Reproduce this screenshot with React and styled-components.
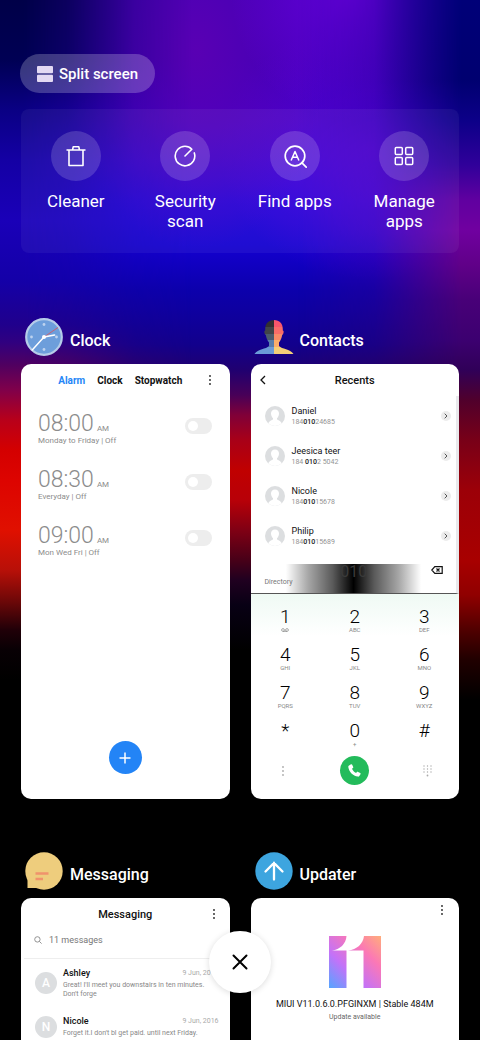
import { useState } from 'react';
import styled, { createGlobalStyle } from 'styled-components';

const GlobalStyle = createGlobalStyle`
    * {
        box-sizing:border-box;
    }
    body {
        margin:0;
        background-color:black;
        font-family:Roboto, "Noto Sans", sans-serif;
    }
    h2, h3, p, ul {
        margin:0;
        padding:0;
    }
    button, input {
        font-family:inherit;
        border:0;
        padding:0;
        background:none;
        color:inherit;
    }
    button {
        cursor:pointer;
    }
    svg {
        display:block;
        flex:none;
    }
`;

const Screen = styled.main`
    position:relative;
    height:100vh;
    overflow:hidden;
    padding:54px 21px 0;
    isolation:isolate;
`;

const Wallpaper = styled.div`
    position:absolute;
    inset:0;
    z-index:-1;
    background:
        radial-gradient(ellipse 120px 130px at 73% -10px, rgba(116,0,228,.8), transparent),
        radial-gradient(ellipse 130px 200px at 41% 50px, rgba(98,0,178,.75), transparent),
        radial-gradient(ellipse 150px 130px at 77% 150px, rgba(92,0,220,.7), transparent),
        linear-gradient(#3c00b8 0, #3c00b8 60px, #4000c4 120px, #3400d0 160px, #2200d8 200px, #1400d0 245px, #0c00ac 290px, #12008c 345px, #200070 370px, #480058 395px, #800038 415px, #a80018 440px, #c00000 470px, #b80008 500px, #800014 530px, #480018 560px, #200020 580px, #080014 605px, #000 650px);
    &::before, &::after {
        content:"";
        position:absolute;
        inset:0;
    }
    &::before {
        background:linear-gradient(#000048 0, #000054 60px, #0a0084 110px, #1400a4 160px, #1a00b8 220px, #1400a8 280px, #20008c 325px, #300080 342px, #500060 365px, #80004a 390px, #b8001a 420px, #d40000 450px, #dd0400 480px, #e01000 530px, #b81008 570px, #700808 600px, #200008 630px, #080004 650px, #000 680px);
        mask-image:linear-gradient(to right, black 5%, rgba(0,0,0,.8) 14%, rgba(0,0,0,.2) 28%, transparent 40%);
    }
    &::after {
        background:linear-gradient(#000078 0, #000070 80px, #0c0088 120px, #30009a 165px, #6000a0 200px, #7000a0 230px, #600088 265px, #480078 300px, #3c0070 340px, #300058 370px, #50002c 400px, #780018 440px, #9c0008 490px, #a80000 560px, #900000 595px, #500000 630px, #200000 660px, #000 700px);
        mask-image:linear-gradient(to left, black 4%, rgba(0,0,0,.7) 11%, rgba(0,0,0,.2) 22%, transparent 38%);
    }
`;

const SplitButton = styled.button`
    display:flex;
    align-items:center;
    gap:6px;
    height:39px;
    margin-left:-1px;
    padding:0 17px;
    border-radius:20px;
    background-color:rgba(255,255,255,.22);
    color:white;
    font-size:15px;
    font-weight:500;
`;

const Tools = styled.section`
    display:grid;
    grid-template-columns:repeat(4, 1fr);
    height:144px;
    margin-top:16px;
    padding-top:22px;
    border-radius:8px;
    background-color:rgba(255,255,255,.05);
`;

const Tool = styled.button`
    display:flex;
    flex-direction:column;
    align-items:center;
    gap:10px;
    color:white;
    font-size:17px;
    line-height:20px;
`;

const ToolIcon = styled.span`
    display:grid;
    place-items:center;
    width:50px;
    height:50px;
    border-radius:50%;
    background-color:rgba(255,255,255,.16);
`;

const ToolLabel = styled.span`
    max-width:80px;
`;

const Recents = styled.section`
    display:grid;
    grid-template-columns:1fr 1fr;
    gap:52px 21px;
    margin-top:64px;
`;

const AppTitle = styled.header`
    display:flex;
    align-items:center;
    gap:6px;
    height:40px;
    margin-bottom:7px;
    padding-left:3px;
    color:white;
    h2 {
        padding-top:7px;
        font-size:16px;
        font-weight:500;
        line-height:20px;
    }
`;

const Card = styled.div`
    display:flex;
    flex-direction:column;
    height:435px;
    overflow:hidden;
    border-radius:10px;
    background-color:white;
    color:#111;
`;

const CardBar = styled.div`
    display:grid;
    grid-template-columns:24px 1fr 24px;
    align-items:center;
    flex:none;
    height:${props => props.$height || 32}px;
    padding-right:${props => props.$end}px;
    text-align:center;
    h3 {
        grid-column:2;
        padding-left:${props => props.$end}px;
        font-size:11px;
        font-weight:500;
    }
`;

const IconButton = styled.button`
    display:grid;
    place-items:center;
    height:24px;
`;

const MoreButton = styled(IconButton)`
    grid-column:3;
`;

const Tabs = styled.div`
    grid-column:2;
    display:flex;
    justify-content:center;
    gap:12px;
    padding-right:2px;
`;

const Tab = styled.button`
    color:${props => props.$active ? '#2586f7' : '#111'};
    font-size:10px;
    font-weight:700;
`;

const AlarmList = styled.ul`
    flex:1;
    padding:17px 18px 0 17px;
    list-style:none;
`;

const AlarmRow = styled.li`
    display:flex;
    align-items:flex-start;
    justify-content:space-between;
    height:56px;
    color:#8c8c8c;
`;

const AlarmTime = styled.p`
    display:flex;
    align-items:baseline;
    gap:3px;
    height:22px;
    font-size:23px;
    font-weight:300;
    line-height:22px;
    span {
        font-size:8px;
        font-weight:400;
    }
`;

const AlarmDays = styled.p`
    font-size:8px;
    line-height:12px;
`;

const Switch = styled.input`
    appearance:none;
    width:27px;
    height:16px;
    margin:5px 0 0;
    padding:3px;
    border-radius:8px;
    background-color:#ededed;
    cursor:pointer;
    &::before {
        content:"";
        display:block;
        width:10px;
        height:10px;
        border-radius:50%;
        background-color:white;
    }
    &:checked {
        background-color:#2586f7;
    }
    &:checked::before {
        margin-left:11px;
    }
`;

const RoundButton = styled.button`
    display:grid;
    place-items:center;
    width:${props => props.$size}px;
    height:${props => props.$size}px;
    border-radius:50%;
    background-color:${props => props.$color};
`;

const AddRow = styled.div`
    display:flex;
    justify-content:center;
    padding-bottom:25px;
`;

const CallList = styled.ul`
    flex:none;
    height:168px;
    border-right:3px solid #e9e9ec;
    list-style:none;
`;

const CallRow = styled.li`
    display:flex;
    align-items:center;
    height:40px;
    padding:0 5px 0 14px;
    > div {
        flex:1;
        margin-left:7px;
    }
`;

const CallName = styled.p`
    font-size:9px;
    line-height:12px;
`;

const CallNumber = styled.p`
    color:#949494;
    font-size:7px;
    line-height:10px;
    b {
        color:#222;
        font-weight:500;
    }
`;

const Chevron = styled.button`
    display:grid;
    place-items:center;
    width:10px;
    height:10px;
    border-radius:50%;
    background-color:#ececec;
`;

const NumberField = styled.div`
    display:grid;
    grid-template-columns:1fr 1fr 1fr;
    flex:none;
    height:30px;
    padding:0 13px 0 14px;
    border-bottom:1px solid #555;
    border-right:3px solid #e9e9ec;
    background:linear-gradient(to right, transparent 17%, rgba(0,0,0,.35) 28%, rgba(0,0,0,.65) 40%, black 50%, rgba(0,0,0,.65) 60%, rgba(0,0,0,.35) 72%, transparent 83%);
    span {
        align-self:center;
        padding-top:6px;
        color:#777;
        font-size:7px;
    }
    input {
        width:100%;
        height:14px;
        color:#3a3a3a;
        font-size:16px;
        text-align:center;
    }
    button {
        justify-self:end;
        height:12px;
    }
`;

const Keypad = styled.div`
    display:grid;
    grid-template-columns:repeat(3, 1fr);
    grid-auto-rows:38px;
    flex:none;
    padding-top:7px;
    background:linear-gradient(#effaf4, white 42px);
`;

const Key = styled.button`
    display:flex;
    flex-direction:column;
    align-items:center;
    padding-top:6px;
    color:black;
    font-size:19px;
    font-weight:300;
    line-height:20px;
    small {
        display:grid;
        place-items:center;
        height:6px;
        color:#888;
        font-size:6px;
        font-weight:400;
        line-height:6px;
    }
`;

const DialBar = styled.div`
    display:grid;
    grid-template-columns:64px 1fr 64px;
    place-items:center;
    padding-top:3px;
`;

const SearchBox = styled.label`
    display:flex;
    align-items:center;
    gap:7px;
    flex:none;
    height:29px;
    margin:0 3px;
    padding:0 10px 8px;
    border-bottom:1px solid #eee;
    input {
        width:100%;
        font-size:9px;
    }
    input::placeholder {
        color:#777;
        opacity:1;
    }
`;

const MessageRow = styled.li`
    display:grid;
    grid-template-columns:22px 1fr;
    align-content:start;
    align-items:center;
    gap:6px;
    height:48px;
    padding:8px 11px 0 14px;
    list-style:none;
`;

const Initial = styled.span`
    display:grid;
    place-items:center;
    width:22px;
    height:22px;
    border-radius:50%;
    background-color:#dcdee0;
    color:white;
    font-size:12px;
    font-weight:500;
`;

const MessageHead = styled.div`
    display:flex;
    align-items:center;
    justify-content:space-between;
    height:12px;
    font-size:9px;
    font-weight:500;
    time {
        color:#aaa;
        font-size:7px;
        font-weight:400;
    }
`;

const MessageText = styled.p`
    margin-top:2px;
    color:#888;
    font-size:7px;
    line-height:9px;
`;

const UpdateInfo = styled.div`
    display:flex;
    flex-direction:column;
    align-items:center;
    padding-top:14px;
    h3 {
        margin-top:10px;
        font-size:9px;
        font-weight:400;
        line-height:12px;
    }
    p {
        margin-top:1px;
        color:#666;
        font-size:7px;
        line-height:12px;
    }
`;

const CloseAll = styled.button`
    position:absolute;
    left:50%;
    bottom:47px;
    display:grid;
    place-items:center;
    width:62px;
    height:62px;
    margin-left:-31px;
    border-radius:50%;
    background-color:white;
    box-shadow:0 1px 6px rgba(0,0,0,.14);
`;

const TrashIcon = () => (
    <svg width="22" height="22" viewBox="0 0 22 22" fill="none" stroke="white" strokeWidth="1.6" strokeLinejoin="round">
        <path d="M1.500 5h19M4 5v15.500h14V5M7.500 5l.7-3.200h5.600l.7 3.200" />
    </svg>
);

const ScanIcon = () => (
    <svg width="22" height="22" viewBox="0 0 22 22" fill="none" stroke="white" strokeWidth="1.600" strokeLinecap="round" strokeLinejoin="round">
        <path d="M11 11l6.800-6.800C16 2.200 13.600 1.200 11 1.200a9.800 9.800 0 1 0 9.300 6.700" />
    </svg>
);

const FindIcon = () => (
    <svg width="24" height="24" viewBox="0 0 24 24" fill="none" stroke="white" strokeWidth="1.700" strokeLinecap="round" strokeLinejoin="round">
        <circle cx="12" cy="12" r="9.800" />
        <path d="M18.700 18.700l4.500 4.500" />
        <path d="M8.300 16l3.700-8.500 3.700 8.500M9.600 13.300h4.800" strokeWidth="1.500" />
    </svg>
);

const GridIcon = () => (
    <svg width="20" height="20" viewBox="0 0 20 20" fill="none" stroke="white" strokeWidth="1.500">
        <rect x="1.300" y="1.500" width="7" height="7" rx="1" />
        <rect x="11.700" y="1.500" width="7" height="7" rx="1" />
        <rect x="1.300" y="11.500" width="7" height="7" rx="1" />
        <rect x="11.700" y="11.500" width="7" height="7" rx="1" />
    </svg>
);

const ClockLogo = () => (
    <svg width="40" height="40" viewBox="0 0 40 40">
        <circle cx="20" cy="20" r="17.800" fill="#6d9edb" stroke="#b5cce9" strokeWidth="2.200" />
        <g fill="#bdd3ef">
            <circle cx="20" cy="7.500" r="1.400" />
            <circle cx="20" cy="32.500" r="1.400" />
            <circle cx="7.500" cy="20" r="1.400" />
            <circle cx="32.500" cy="20" r="1.400" />
        </g>
        <path d="M20 20L34 10.500" stroke="#d35a68" strokeWidth=".9" />
        <path d="M20 20l10.500-2" stroke="white" strokeWidth="1.700" strokeLinecap="round" />
        <path d="M20 20L8.200 33" stroke="white" strokeWidth="1.500" strokeLinecap="round" />
        <circle cx="20" cy="20" r="2" fill="white" />
    </svg>
);

const ContactsLogo = () => (
    <svg width="40" height="40" viewBox="0 0 40 40">
        <clipPath id="bust">
            <path d="M20 3c5.500 0 8.800 3.500 8.800 9v1.500c1.400 0 .9 3.800-.6 4.500-.5 3.500-1.700 5.500-3.200 7.500v3.500c3 3.500 11 2.500 14.500 8H.5c3.500-5.500 11.500-4.500 14.500-8v-3.500c-1.500-2-2.700-4-3.200-7.500-1.500-.7-2-4.500-.6-4.500V12C11.200 6.500 14.500 3 20 3z" />
        </clipPath>
        <g clipPath="url(#bust)">
            <path fill="#322f31" d="M0 3h20v7H0z" />
            <path fill="#414448" d="M0 10h20v7H0z" />
            <path fill="#4b5b6c" d="M0 17h20v6H0z" />
            <path fill="#587fac" d="M0 23h20v7H0z" />
            <path fill="#6b9bd8" d="M0 30h20v8H0z" />
            <path fill="#f9566b" d="M20 3h20v7H20z" />
            <path fill="#f96c68" d="M20 10h20v7H20z" />
            <path fill="#f98b67" d="M20 17h20v6H20z" />
            <path fill="#f9ae6b" d="M20 23h20v7H20z" />
            <path fill="#f4cf78" d="M20 30h20v8H20z" />
        </g>
    </svg>
);

const MessagingLogo = () => (
    <svg width="40" height="40" viewBox="0 0 40 40">
        <circle cx="20" cy="20" r="18.700" fill="#eecd7d" />
        <path d="M3.500 22v15H20z" fill="#eecd7d" />
        <path d="M11.500 22.500h13M11.500 28h7.500" stroke="#f0936c" strokeWidth="2.400" />
    </svg>
);

const UpdaterLogo = () => (
    <svg width="40" height="40" viewBox="0 0 40 40" fill="none">
        <circle cx="20" cy="20" r="18.700" fill="#3da5df" />
        <path d="M20 28.500V12M11.500 20.500L20 12l8.500 8.500" stroke="white" strokeWidth="2.300" strokeLinecap="round" />
    </svg>
);

const MoreIcon = ({ color = '#222' }) => (
    <svg width="4" height="12" viewBox="0 0 4 12" fill={color}>
        <circle cx="2" cy="2" r=".9" />
        <circle cx="2" cy="6" r=".9" />
        <circle cx="2" cy="10" r=".9" />
    </svg>
);

const PersonIcon = () => (
    <svg width="20" height="20" viewBox="0 0 20 20">
        <circle cx="10" cy="10" r="10" fill="#dcdee0" />
        <path d="M10 3.500c2.600 0 4 1.700 4 4 0 2.400-1 3.700-2 4.700v1.300c1.200.9 3.600 1 4.800 3.800A10 10 0 0 1 3.200 17.300C4.400 14.500 6.800 14.400 8 13.500v-1.300c-1-1-2-2.300-2-4.700 0-2.300 1.400-4 4-4z" fill="white" />
    </svg>
);

const VoicemailIcon = () => (
    <svg width="8" height="4" viewBox="0 0 8 4" fill="none" stroke="#888" strokeWidth=".7">
        <circle cx="2" cy="2" r="1.400" />
        <circle cx="6" cy="2" r="1.400" />
        <path d="M2 3.400h4" />
    </svg>
);

const MiuiLogo = () => (
    <svg width="52" height="52" viewBox="0 0 52 52">
        <defs>
            <linearGradient id="miui" x1="0" y1="1" x2="1" y2="0">
                <stop offset="0" stopColor="#55a5ff" />
                <stop offset=".35" stopColor="#c372f8" />
                <stop offset=".7" stopColor="#fb78b5" />
                <stop offset="1" stopColor="#ffad7b" />
            </linearGradient>
        </defs>
        <path fill="url(#miui)" d="M0 0h17.500C17 8 11 13.500 3 14.500h14.500V52H0zM35 0h17v52H34.500V14.500H19C28 13.500 34 8 35 0z" />
    </svg>
);

const tools = [
    { label: 'Cleaner', icon: <TrashIcon /> },
    { label: 'Security scan', icon: <ScanIcon /> },
    { label: 'Find apps', icon: <FindIcon /> },
    { label: 'Manage apps', icon: <GridIcon /> },
];

const alarms = [
    { time: '08:00', days: 'Monday to Friday | Off' },
    { time: '08:30', days: 'Everyday | Off' },
    { time: '09:00', days: 'Mon Wed Fri | Off' },
];

const calls = [
    { name: 'Daniel', number: ['184', '010', '24685'] },
    { name: 'Jeesica teer', number: ['184 ', '010', '2 5042'] },
    { name: 'Nicole', number: ['184', '010', '15678'] },
    { name: 'Philip', number: ['184', '010', '15689'] },
];

const keys = [
    ['1', <VoicemailIcon />], ['2', 'ABC'], ['3', 'DEF'],
    ['4', 'GHI'], ['5', 'JKL'], ['6', 'MNO'],
    ['7', 'PQRS'], ['8', 'TUV'], ['9', 'WXYZ'],
    ['*', ''], ['0', '+'], ['#', ''],
];

const messages = [
    { name: 'Ashley', text: "Great! I'll meet you downstairs in ten minutes. Don't forge" },
    { name: 'Nicole', text: "Forget it.I don't bl get paid. until next Friday." },
];

const ClockCard = () => {

    const [tab, setTab] = useState('Alarm');

    return (
        <Card>
            <CardBar $end={8}>
                <Tabs>
                    {['Alarm', 'Clock', 'Stopwatch'].map(name => (
                        <Tab key={name} $active={tab === name} onClick={() => setTab(name)}>{name}</Tab>
                    ))}
                </Tabs>
                <MoreButton aria-label="More"><MoreIcon /></MoreButton>
            </CardBar>
            <AlarmList>
                {alarms.map(alarm => (
                    <AlarmRow key={alarm.time}>
                        <div>
                            <AlarmTime>{alarm.time}<span>AM</span></AlarmTime>
                            <AlarmDays>{alarm.days}</AlarmDays>
                        </div>
                        <Switch type="checkbox" aria-label={alarm.time} />
                    </AlarmRow>
                ))}
            </AlarmList>
            <AddRow>
                <RoundButton $size={33} $color="#2384f6" aria-label="Add alarm">
                    <svg width="12" height="12" viewBox="0 0 12 12" stroke="white" strokeWidth="1.500"><path d="M6 .5v11M.5 6h11" /></svg>
                </RoundButton>
            </AddRow>
        </Card>
    )
}

const ContactsCard = () => {

    const [number, setNumber] = useState('010');

    return (
        <Card>
            <CardBar $end={0}>
                <IconButton aria-label="Back">
                    <svg width="6" height="10" viewBox="0 0 6 10" fill="none" stroke="#111" strokeWidth="1.300"><path d="M5 1L1 5l4 4" /></svg>
                </IconButton>
                <h3>Recents</h3>
            </CardBar>
            <CallList>
                {calls.map(call => (
                    <CallRow key={call.name}>
                        <PersonIcon />
                        <div>
                            <CallName>{call.name}</CallName>
                            <CallNumber>{call.number[0]}<b>{call.number[1]}</b>{call.number[2]}</CallNumber>
                        </div>
                        <Chevron aria-label={call.name}>
                            <svg width="4" height="6" viewBox="0 0 4 6" fill="none" stroke="#555" strokeWidth="1"><path d="M.7.7L3 3 .7 5.300" /></svg>
                        </Chevron>
                    </CallRow>
                ))}
            </CallList>
            <NumberField>
                <span>Directory</span>
                <input aria-label="Number" value={number} onChange={evt => setNumber(evt.target.value)} />
                <button aria-label="Delete" onClick={() => setNumber(number.slice(0, -1))}>
                    <svg width="12" height="8" viewBox="0 0 12 8" fill="none" stroke="#111" strokeWidth="1.200">
                        <path d="M3.800.7h7.400v6.600H3.800L.8 4zM5.500 2.500l3 3M8.500 2.500l-3 3" />
                    </svg>
                </button>
            </NumberField>
            <Keypad>
                {keys.map(([digit, letters]) => (
                    <Key key={digit} onClick={() => setNumber(number + digit)}>
                        {digit}
                        <small>{letters}</small>
                    </Key>
                ))}
            </Keypad>
            <DialBar>
                <IconButton aria-label="Options"><MoreIcon color="#aaa" /></IconButton>
                <RoundButton $size={29} $color="#23bb5b" aria-label="Call">
                    <svg width="13" height="13" viewBox="0 0 13 13" fill="white">
                        <path d="M1.100 1.500L3 .3c.5-.3 1-.1 1.200.4l1 2.200c.2.500.1.9-.3 1.200l-.9.700c.8 1.900 2.200 3.300 4.100 4.200l.8-.9c.3-.4.700-.5 1.200-.2l2.100 1.100c.5.300.6.800.3 1.200l-1.200 1.800c-.3.500-.8.700-1.400.6C4.900 11.800 1 7.800.3 2.900c-.1-.6.2-1.100.8-1.400z" />
                    </svg>
                </RoundButton>
                <IconButton aria-label="Hide keypad">
                    <svg width="9" height="12" viewBox="0 0 9 12" fill="#aaa">
                        {[1, 4, 7].map(y => [1, 4.5, 8].map(x => <circle key={x + '-' + y} cx={x} cy={y} r=".7" />))}
                        <circle cx="4.500" cy="10.500" r=".9" />
                    </svg>
                </IconButton>
            </DialBar>
        </Card>
    )
}

const MessagingCard = () => (
    <Card>
        <CardBar $end={4}>
            <h3>Messaging</h3>
            <MoreButton aria-label="More"><MoreIcon /></MoreButton>
        </CardBar>
        <SearchBox>
            <svg width="8" height="8" viewBox="0 0 8 8" fill="none" stroke="#888" strokeWidth=".9"><circle cx="3.400" cy="3.400" r="2.700" /><path d="M5.400 5.400l2.200 2.200" /></svg>
            <input placeholder="11 messages" aria-label="Search messages" />
        </SearchBox>
        <ul>
            {messages.map(message => (
                <MessageRow key={message.name}>
                    <Initial>{message.name[0]}</Initial>
                    <div>
                        <MessageHead>{message.name}<time>9 Jun, 2016</time></MessageHead>
                        <MessageText>{message.text}</MessageText>
                    </div>
                </MessageRow>
            ))}
        </ul>
    </Card>
)

const UpdaterCard = () => (
    <Card>
        <CardBar $end={5} $height={24}>
            <MoreButton aria-label="More"><MoreIcon /></MoreButton>
        </CardBar>
        <UpdateInfo>
            <MiuiLogo />
            <h3>MIUI V11.0.6.0.PFGINXM | Stable 484M</h3>
            <p>Update available</p>
        </UpdateInfo>
    </Card>
)

const apps = [
    { name: 'Clock', logo: <ClockLogo />, card: <ClockCard /> },
    { name: 'Contacts', logo: <ContactsLogo />, card: <ContactsCard /> },
    { name: 'Messaging', logo: <MessagingLogo />, card: <MessagingCard /> },
    { name: 'Updater', logo: <UpdaterLogo />, card: <UpdaterCard /> },
];

const App = () => (
    <Screen>
        <GlobalStyle />
        <Wallpaper />
        <SplitButton>
            <svg width="16" height="16" viewBox="0 0 16 16" fill="#e3d9f3">
                <rect width="16" height="7.300" rx="1" />
                <rect y="8.700" width="16" height="7.300" rx="1" />
            </svg>
            Split screen
        </SplitButton>
        <Tools>
            {tools.map(tool => (
                <Tool key={tool.label}>
                    <ToolIcon>{tool.icon}</ToolIcon>
                    <ToolLabel>{tool.label}</ToolLabel>
                </Tool>
            ))}
        </Tools>
        <Recents>
            {apps.map(app => (
                <article key={app.name}>
                    <AppTitle>{app.logo}<h2>{app.name}</h2></AppTitle>
                    {app.card}
                </article>
            ))}
        </Recents>
        <CloseAll aria-label="Close all">
            <svg width="16" height="16" viewBox="0 0 16 16" stroke="black" strokeWidth="2" strokeLinecap="round"><path d="M1.500 1.500l13 13M14.500 1.500l-13 13" /></svg>
        </CloseAll>
    </Screen>
);

export default App;
